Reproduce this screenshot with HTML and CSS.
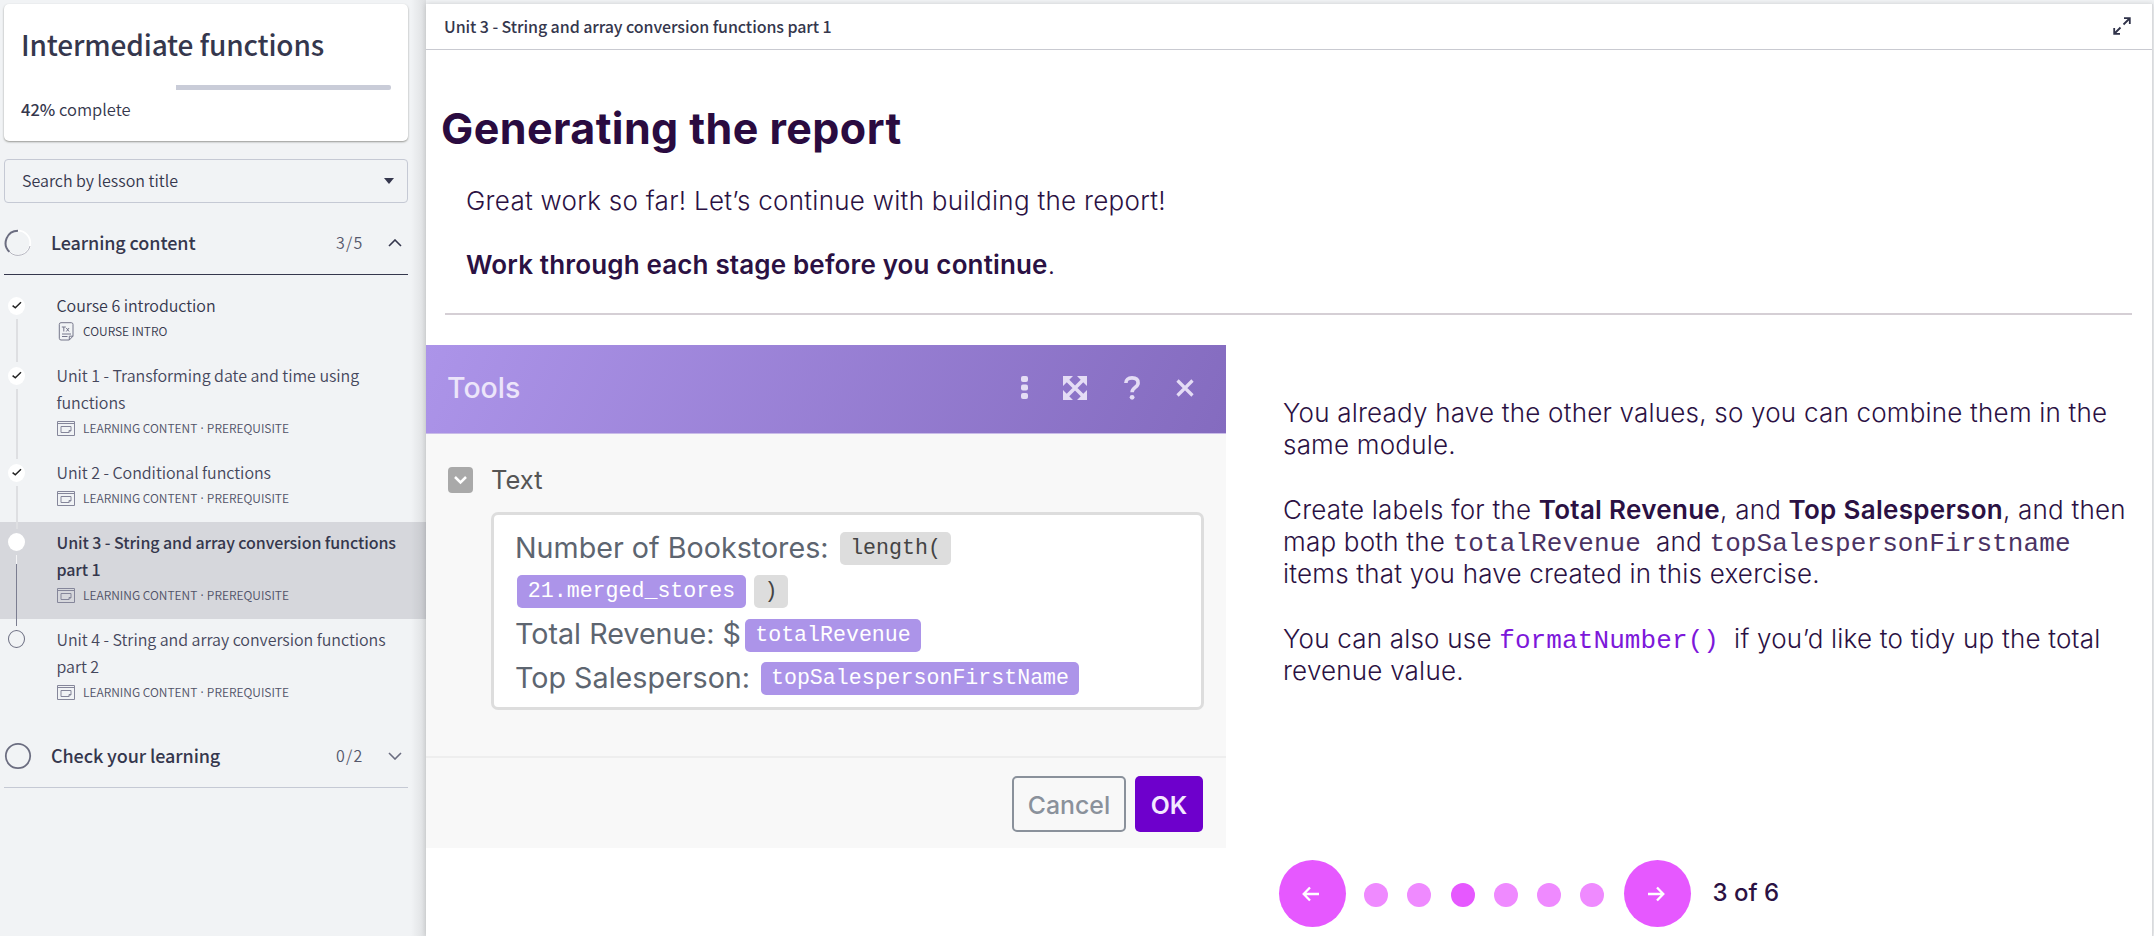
FILE: index.html
```html
<!DOCTYPE html>
<html lang="en">
<head>
<meta charset="utf-8">
<title>Intermediate functions</title>
<link rel="stylesheet" href="styles.css">
</head>
<body>
<svg class="defs" width="0" height="0">
  <symbol id="check" viewBox="0 0 17 18"><path d="M4.600 8.600l2.700 2.200L13 5.200" fill="none" stroke="#222" stroke-width="1.500"/></symbol>
  <symbol id="content" viewBox="0 0 18 15"><path d="M.5.5h17v14H.5zM.5 2.500h17M4 5.500h10v4l-2 2H4zM14 9.500h-2v2" fill="none" stroke="#85869a"/></symbol>
</svg>
<div class="app">
  <aside class="sidebar">
    <section class="card">
      <h1>Intermediate functions</h1>
      <div class="progress"><div class="rest"></div></div>
      <p class="complete"><b>42%</b> complete</p>
    </section>
    <div class="search"><span>Search by lesson title</span><i class="caret"></i></div>
    <div class="group open">
      <svg class="ring" viewBox="0 0 28 28"><circle cx="14" cy="14" r="12.3" fill="none" stroke="#fff" stroke-width="1.8"/><path d="M14 1.7A12.3 12.3 0 0 0 5.5 22.9" fill="none" stroke="#6b6d80" stroke-width="2"/><path d="M5.5 22.9A12.3 12.3 0 0 0 26 17" fill="none" stroke="#9c9dab" stroke-width=".8"/></svg>
      <span class="gname">Learning content</span><span class="count">3/5</span>
      <svg class="chev" viewBox="0 0 14 8"><path d="M1 7l6-6 6 6" fill="none" stroke="#35374d" stroke-width="1.6"/></svg>
    </div>
    <ol class="lessons">
      <li class="done"><span class="rail"><svg class="mark"><use href="#check"/></svg><i class="line"></i></span>
        <div><p class="name dark">Course 6 introduction</p>
        <p class="meta dark"><svg class="doc" viewBox="0 0 16 19"><path d="M3 .7h10.3a1.7 1.7 0 0 1 1.7 1.7v11.8L11.3 18H3a1.7 1.7 0 0 1-1.700-1.700V2.400A1.700 1.700 0 0 1 3 .7zM15 14.200h-3.700V18M4 12h9M4 14.500h5.500M3.800 5h4M5.800 5v4.500M8.300 6l2.800 3.500M11.100 6L8.300 9.500" fill="none" stroke="#75768a"/></svg><span>COURSE INTRO</span></p></div></li>
      <li class="done"><span class="rail"><svg class="mark"><use href="#check"/></svg><i class="line"></i></span>
        <div><p class="name">Unit 1 - Transforming date and time using<br>functions</p>
        <p class="meta"><svg class="ic"><use href="#content"/></svg><span>LEARNING CONTENT <em>·</em> PREREQUISITE</span></p></div></li>
      <li class="done"><span class="rail"><svg class="mark"><use href="#check"/></svg><i class="line"></i></span>
        <div><p class="name">Unit 2 - Conditional functions</p>
        <p class="meta"><svg class="ic"><use href="#content"/></svg><span>LEARNING CONTENT <em>·</em> PREREQUISITE</span></p></div></li>
      <li class="current"><span class="rail"><i class="mark"></i><i class="line"></i></span>
        <div><p class="name">Unit 3 - String and array conversion functions<br>part 1</p>
        <p class="meta"><svg class="ic"><use href="#content"/></svg><span>LEARNING CONTENT <em>·</em> PREREQUISITE</span></p></div></li>
      <li class="todo"><span class="rail"><i class="mark"></i></span>
        <div><p class="name">Unit 4 - String and array conversion functions<br>part 2</p>
        <p class="meta"><svg class="ic"><use href="#content"/></svg><span>LEARNING CONTENT <em>·</em> PREREQUISITE</span></p></div></li>
    </ol>
    <div class="group closed">
      <svg class="ring" viewBox="0 0 28 28"><circle cx="14" cy="14" r="12.200" fill="none" stroke="#6b6d80" stroke-width="1.800"/></svg>
      <span class="gname">Check your learning</span><span class="count">0/2</span>
      <svg class="chev" viewBox="0 0 14 8"><path d="M1 1l6 6 6-6" fill="none" stroke="#6b6d80" stroke-width="1.600"/></svg>
    </div>
  </aside>
  <main class="main">
    <header class="bar"><span class="crumb">Unit 3 - String and array conversion functions part 1</span>
      <svg class="full" viewBox="0 0 18 18"><path d="M10.500 7.500L16.500 1.500M11 1.200h5.800v5.800M7.500 10.500L1.500 16.500M1.200 11v5.800h5.800" fill="none" stroke="#2f3249" stroke-width="1.800"/></svg></header>
    <section class="intro">
      <h2>Generating the report</h2>
      <p class="lead">Great work so far! Let’s continue with building the report!</p>
      <p class="strong"><b>Work through each stage before you continue</b>.</p>
    </section>
    <div class="columns">
      <div class="panel">
        <div class="phead"><span class="ptitle">Tools</span>
          <svg class="pi dots" viewBox="0 0 7 24"><rect width="7" height="6" rx="2"/><rect y="8.500" width="7" height="6" rx="2"/><rect y="17" width="7" height="6" rx="2"/></svg>
          <svg class="pi exp" viewBox="0 0 24 24"><path d="M4 4l16 16M20 4L4 20" stroke="#e4dcf5" stroke-width="3.600"/><path d="M0 0h10L0 10zM24 0v10L14 0zM0 24v-10l10 10zM24 24h-10l10-10z"/></svg>
          <svg class="pi q" viewBox="0 0 16 24"><path d="M1.900 7C1.900 3.800 4 1.900 8 1.900s6.100 2 6.100 5c0 4.500-6 4.600-6 9.300" fill="none" stroke="#e4dcf5" stroke-width="3.600"/><circle cx="8.100" cy="21.300" r="2.400"/></svg>
          <svg class="pi x" viewBox="0 0 18 18"><path d="M1.500 1.500l15 15M16.500 1.500l-15 15" stroke="#e4dcf5" stroke-width="3.200"/></svg>
        </div>
        <div class="pbody">
          <div class="label"><svg viewBox="0 0 25 26"><rect width="25" height="26" rx="4" fill="#a9a9a9"/><path d="M7 10l5.500 5.500L18 10" fill="none" stroke="#fff" stroke-width="2.500"/></svg><span>Text</span></div>
          <div class="field">
            <div class="row"><span class="w1">Number of Bookstores:</span><code class="grey c1">length(</code></div>
            <div class="row"><code class="c2">21.merged_stores</code><code class="grey c3">)</code></div>
            <div class="row"><span class="w3">Total Revenue: $</span><code class="c4">totalRevenue</code></div>
            <div class="row"><span class="w4">Top Salesperson:</span><code class="c5">topSalespersonFirstName</code></div>
          </div>
        </div>
        <div class="pfoot"><span class="btn cancel">Cancel</span><span class="btn ok">OK</span></div>
      </div>
      <div class="side">
        <div class="copy">
          <p>You already have the other values, so you can combine them in the<br>same module.</p>
          <p>Create labels for the <b>Total Revenue</b>, and <b>Top Salesperson</b>, and then<br>map both the <code>totalRevenue</code>&nbsp; and <code>topSalespersonFirstname</code><br>items that you have created in this exercise.</p>
          <p>You can also use <code class="fn">formatNumber()</code>&nbsp; if you’d like to tidy up the total<br>revenue value.</p>
        </div>
        <div class="pager">
          <span class="nav"><svg viewBox="0 0 18 16"><path d="M17 8H2M8 1.500L1.700 8 8 14.500" fill="none" stroke="#fff" stroke-width="2.300"/></svg></span>
          <div class="pips"><i></i><i></i><i class="on"></i><i></i><i></i><i></i></div>
          <span class="nav"><svg viewBox="0 0 18 16"><path d="M1 8h15M10 1.500L16.300 8 10 14.500" fill="none" stroke="#fff" stroke-width="2.300"/></svg></span>
          <span class="of">3 of 6</span>
        </div>
      </div>
    </div>
  </main>
</div>
</body>
</html>
```

FILE: styles.css
```css
* { box-sizing: border-box; margin: 0; padding: 0; }
body { background: #f1f3f5; font-family: "Noto Sans CJK SC", sans-serif; color: #35374d; overflow: hidden; }
.defs { display: block; }
.app { display: flex; height: 936px; }
svg, i { display: block; flex: none; }
p, span, h1, h2, code { white-space: nowrap; }

/* Sidebar */
.sidebar { width: 426px; flex: none; padding-top: 4px; background: linear-gradient(90deg, transparent 411px, #dddfe1 426px); }
.card { margin-left: 4px; width: 404px; height: 137px; padding: 19px 18px 0 17px; background: #fff; border-radius: 5px; box-shadow: 0 1px 2px rgba(60,60,50,.5); }
.card h1 { font-size: 28px; font-weight: 500; line-height: 42px; letter-spacing: -.15px; }
.progress { margin-top: 20px; height: 5px; padding-left: 155px; }
.rest { width: 215px; height: 5px; background: #c9ccd8; border-radius: 0 2px 2px 0; }
.complete { margin-top: 6px; font-size: 16.500px; font-weight: 350; line-height: 26px; }
.complete b { font-weight: 500; }
.search { margin: 18px 0 0 4px; width: 404px; height: 44px; padding: 0 13px 2px 17px; border: 1px solid #c5c9d4; border-radius: 4px; display: flex; align-items: center; justify-content: space-between; font-size: 16px; font-weight: 350; }
.caret { border: 5px solid transparent; border-top: 6px solid #35374d; border-bottom: 0; margin-top: 2px; }
.group { display: flex; align-items: center; margin-left: 4px; width: 404px; }
.open { height: 72px; border-bottom: 1px solid #35374d; padding-top: 8px; }
.closed { height: 72px; border-bottom: 1px solid #c5c9d4; padding-top: 9px; }
.ring { width: 28px; height: 28px; }
.gname { margin-left: 19px; font-size: 18px; font-weight: 500; flex: 1; letter-spacing: -.1px; padding-bottom: 2px; }
.count { font-size: 16px; font-weight: 350; letter-spacing: 1.200px; color: #55576b; width: 52px; padding-bottom: 2px; }
.chev { width: 14px; height: 8px; margin-right: 6px; }
.lessons { list-style: none; padding-top: 10px; }
.lessons li { display: flex; padding: 7px 0 12px; }
.rail { width: 56.500px; flex: none; padding: 4px 0 0 8px; display: flex; flex-direction: column; }
.done .rail { padding-top: 5px; }
.mark { width: 17px; height: 18px; border-radius: 50%; background: #fff; }
.rail .line { width: 2px; flex: 1; margin: 4px 0 -19px 8px; background: #dedfe2; }
.name { font-size: 16px; font-weight: 350; line-height: 27px; color: #45475c; letter-spacing: -.04px; }
.meta { height: 24px; display: flex; align-items: center; font-size: 12px; font-weight: 350; color: #505267; }
.meta span { padding-bottom: 1px; }
.meta em { font: 12px "Open Sans", sans-serif; margin: 0 .500px; }
.dark { color: #35374d; }
.meta svg { width: 18px; height: 15px; margin-right: 8.500px; }
.meta .doc { width: 16px; height: 19px; margin: 0 9px 0 1.500px; }
.current { background: rgba(120,120,130,.22); }
.current .name { font-weight: 500; color: #35374d; letter-spacing: -.09px; }
.current .line { width: 1px; background: linear-gradient(#f4f4f6 9px, #7b7d90 9px); }
.todo .mark { background: none; border: 1px solid #6b6d80; }

/* Lesson player */
.main { width: 1727px; margin-top: 4px; background: #fff; border-right: 1px solid #d9dadd; box-shadow: 0 0 5px rgba(0,0,0,.16); font-family: Inter, sans-serif; color: #2b1143; }
.bar { height: 46px; padding: 0 21px 0 18px; display: flex; align-items: center; justify-content: space-between; border-bottom: 1px solid #c9cad1; font-family: "Noto Sans CJK SC", sans-serif; font-size: 16px; font-weight: 500; letter-spacing: -.08px; color: #35374d; }
.crumb { padding-bottom: 2px; }
.full { width: 18px; height: 18px; margin-bottom: 2px; }
.intro { height: 265px; margin: 0 20px 0 19px; border-bottom: 2px solid #d5cfd5; padding-top: 50px; }
.intro h2 { margin-left: -4px; font-size: 43px; font-weight: 700; line-height: 56px; color: #2a0b40; letter-spacing: .42px; }
.intro p { margin-left: 21px; font-size: 26px; font-weight: 300; line-height: 32px; }
.intro .lead { margin-top: 29px; letter-spacing: .28px; }
.intro .strong { margin-top: 32px; letter-spacing: .15px; }
b { font-weight: 600; }
.columns { display: flex; padding-top: 30px; }
.panel { width: 800px; height: 503px; background: #f8f8f8; flex: none; }
.phead { height: 89px; display: flex; align-items: center; padding: 0 32px 3px 21px; background: linear-gradient(115deg, #ac94e9, #846bbf); border-bottom: 1px solid #c9bce8; }
.ptitle { flex: 1; font-size: 28.500px; font-weight: 500; color: #ece5fa; }
.pi { fill: #e4dcf5; }
.dots { width: 7px; height: 24px; margin-right: 35px; }
.exp { width: 24px; height: 24px; margin-right: 37px; }
.q { width: 16px; height: 24px; margin-right: 36px; }
.x { width: 18px; height: 18px; }
.pbody { height: 324px; padding: 32px 22px 0; border-bottom: 2px solid #eee; }
.label { display: flex; align-items: center; height: 28px; font-size: 25.500px; color: #555; }
.label svg { width: 25px; height: 26px; margin-right: 18px; }
.label span { padding-bottom: 1px; }
.field { margin: 18px 0 0 43px; width: 713px; height: 198px; border: 3px solid #ddd; border-radius: 7px; background: #fff; padding: 12px 0 0 21px; font-size: 28.700px; color: #5d6570; }
.row { display: flex; align-items: center; height: 43.300px; }
.row span { padding-bottom: 3px; }
.row code { height: 33px; border-radius: 5px; background: #ac94e9; color: #fff; font: 21.600px/32px "Liberation Mono", monospace; text-align: center; }
.row .grey { background: #ddd; color: #444; }
.w1 { width: 325px; }
.w3 { width: 230px; }
.w4 { width: 246px; }
.c1 { width: 111px; }
.c2 { width: 229px; margin: 0 8px 0 2px; }
.c3 { width: 34px; }
.c4 { width: 176px; }
.c5 { width: 318px; }
.pfoot { display: flex; justify-content: flex-end; padding: 18px 23px 0 0; gap: 9px; }
.btn { height: 56px; border-radius: 5px; display: flex; align-items: center; justify-content: center; font-size: 24.800px; font-weight: 500; padding-top: 2px; }
.cancel { width: 114px; border: 2px solid #8a919b; color: #8a919b; }
.ok { width: 68px; background: #6e00cc; color: #f3e8ff; font-weight: 600; }
.side { padding: 52px 0 0 57px; }
.copy { height: 463px; font-size: 26px; font-weight: 300; line-height: 32.300px; letter-spacing: .21px; }
.copy p + p { margin-top: 32.300px; }
.copy b { letter-spacing: .3px; }
.copy code { font-family: "Liberation Mono", monospace; font-size: 26px; line-height: 1; letter-spacing: .1px; color: #4b3363; }
.copy .fn { color: #7d18da; }
.pager { display: flex; align-items: center; margin-left: -4px; }
.nav { width: 67px; height: 67px; border-radius: 50%; background: #e658ff; display: flex; align-items: center; justify-content: center; }
.nav svg { width: 18px; height: 16px; margin-right: 3px; }
.pips { display: flex; gap: 19.300px; margin: 3px 20px 0 18px; }
.pips i { width: 24px; height: 24px; border-radius: 50%; background: #ef8aff; }
.pips .on { background: #e658ff; }
.of { margin-left: 21px; font-size: 24px; font-weight: 500; padding-bottom: 2px; }
```
